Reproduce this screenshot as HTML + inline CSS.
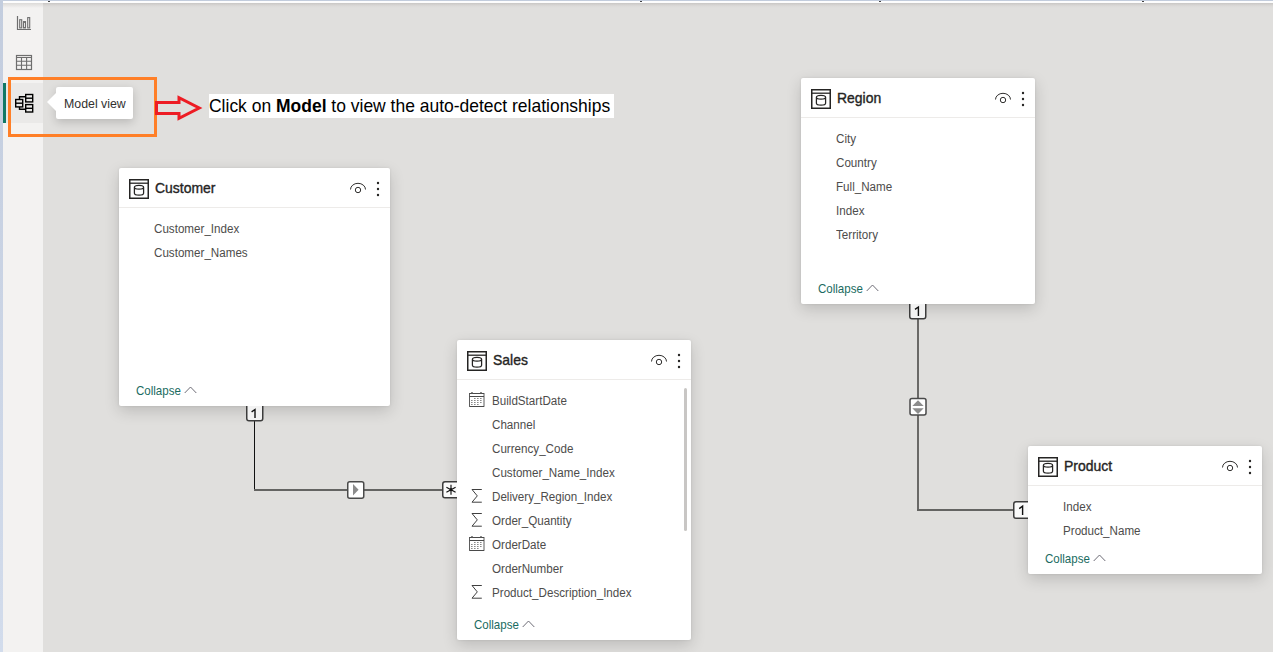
<!DOCTYPE html>
<html><head><meta charset="utf-8"><style>
*{box-sizing:border-box;margin:0;padding:0}
html,body{width:1273px;height:652px;overflow:hidden;background:#e0dfdd;font-family:"Liberation Sans",sans-serif;position:relative}
.abs{position:absolute}
.t{position:absolute;white-space:nowrap;transform-origin:0 0}
.card{position:absolute;background:#fff;border-radius:2px;box-shadow:0 5px 15px rgba(0,0,0,0.16),0 0 3px rgba(0,0,0,0.08)}
.card .ticon{position:absolute;left:9.5px;top:11px;width:20px;height:20px}
.card .title{left:36px;top:11px;font-size:15px;font-weight:400;-webkit-text-stroke:0.38px #252423;color:#252423;line-height:18px;transform:scaleX(0.93)}
.card .eye{position:absolute;top:12px;width:18px;height:14px}
.card .dots{position:absolute;top:12px;width:6px;height:18px}
.card .sep{position:absolute;left:0;right:0;top:39px;height:1px;background:#edebe9}
.card .f{left:34.5px;font-size:12.5px;color:#4d4c4b;line-height:14px;transform:scaleX(0.93)}
.card .col{left:16.5px;font-size:12.8px;color:#1a6b61;line-height:14px;transform:scaleX(0.9)}
.card .chev{position:absolute}
.fic{position:absolute}
</style></head><body>
<div class="abs" style="left:0;top:0;width:1273px;height:1px;background:#c2ccdc"></div>
<div class="abs" style="left:0;top:1px;width:1273px;height:2px;background:#fdfdfd"></div>
<div class="abs" style="left:3px;top:3px;width:1270px;height:5px;background:linear-gradient(#c9c7c5,#dcdad8 60%,rgba(224,223,221,0))"></div>
<div class="abs" style="left:0;top:0;width:3px;height:652px;background:linear-gradient(#c3cdde,#d2dcec)"></div>
<div class="abs" style="left:3px;top:3px;width:40px;height:649px;background:#f3f2f1"></div>
<div class="abs" style="left:3px;top:3px;width:40px;height:5px;background:linear-gradient(#dcdad8,rgba(243,242,241,0))"></div>
<div class="abs" style="left:6px;top:83px;width:37px;height:40px;background:#eae9e8"></div>
<div class="abs" style="left:3px;top:83px;width:3px;height:40px;background:#117865"></div>
<div class="abs" style="left:48px;top:1px;width:1.5px;height:1px;background:#444"></div>
<div class="abs" style="left:640px;top:1px;width:1.5px;height:1px;background:#444"></div>
<div class="abs" style="left:879px;top:1px;width:1.5px;height:1px;background:#444"></div>
<div class="abs" style="left:1142px;top:1px;width:1.5px;height:1px;background:#444"></div>
<svg class="abs" style="left:15px;top:15px" width="17" height="16" viewBox="0 0 17 16">
  <path d="M2.5 1 V14.5 H16" fill="none" stroke="#6e6e6e" stroke-width="1.2"/>
  <rect x="4.7" y="4.7" width="2" height="8.2" fill="none" stroke="#6e6e6e" stroke-width="1.1"/>
  <rect x="8.5" y="6.6" width="2" height="6.3" fill="none" stroke="#6e6e6e" stroke-width="1.1"/>
  <rect x="12.7" y="2.6" width="2" height="10.3" fill="none" stroke="#6e6e6e" stroke-width="1.1"/>
</svg>
<svg class="abs" style="left:15px;top:54px" width="18" height="17" viewBox="0 0 18 17">
  <rect x="1.5" y="1.5" width="15" height="14" fill="none" stroke="#6e6e6e" stroke-width="1.2"/>
  <path d="M1.5 3.5 H16.5 M1.5 7.3 H16.5 M1.5 11.3 H16.5 M6.5 3.5 V15.5 M11.6 3.5 V15.5" fill="none" stroke="#6e6e6e" stroke-width="1.1"/>
</svg>
<svg class="abs" style="left:14px;top:93px" width="20" height="20" viewBox="0 0 20 20">
  <g fill="none" stroke="#000" stroke-width="1.4">
    <rect x="1.7" y="6.5" width="7" height="7.4"/>
    <path d="M1.7 10.2 H8.7"/>
    <rect x="11.7" y="1.5" width="7" height="7.4"/>
    <path d="M11.7 5.2 H18.7"/>
    <rect x="11.7" y="11.6" width="7" height="7.4"/>
    <path d="M11.7 15.3 H18.7"/>
    <path d="M5.5 6.5 V3.7 H11.7 M5.5 13.9 V16.3 H11.7"/>
  </g>
</svg>
<div class="abs" style="left:8px;top:77px;width:149px;height:60px;border:3px solid #ff7f27"></div>
<div class="abs" style="left:56px;top:87px;width:77px;height:32px;background:#fff;border-radius:2px;box-shadow:0 3px 10px rgba(0,0,0,0.18)"></div>
<svg class="abs" style="left:46px;top:91px" width="12" height="22" viewBox="0 0 12 22"><path d="M11 1 L1 11 L11 21 Z" fill="#fff"/></svg>
<div class="t" style="left:63.5px;top:96.5px;font-size:13px;color:#323130;line-height:14px;transform:scaleX(0.95)">Model view</div>
<svg class="abs" style="left:153px;top:94px" width="52" height="29" viewBox="0 0 52 29"><path d="M3.5 8.6 H26 V3.6 L46.2 14 L26 24.4 V19.4 H3.5 Z" fill="none" stroke="#ed1c24" stroke-width="3"/></svg>
<div class="abs" style="left:209px;top:94px;width:405px;height:24px;background:#fff"></div>
<div class="t" style="left:208.7px;top:96px;font-size:17.7px;color:#000;line-height:20px;transform:scaleX(0.988)">Click on <b>Model</b> to view the auto-detect relationships</div>
<div class="abs" style="left:254px;top:420px;width:1px;height:71px;background:#111"></div>
<div class="abs" style="left:254px;top:489px;width:94px;height:2px;background:#646462"></div>
<div class="abs" style="left:363px;top:489px;width:80px;height:2px;background:#646462"></div>
<div class="abs" style="left:917px;top:318px;width:2px;height:81px;background:#6a6967"></div>
<div class="abs" style="left:917px;top:415px;width:2px;height:96px;background:#6a6967"></div>
<div class="abs" style="left:917px;top:509px;width:97px;height:2px;background:#646462"></div>
<div class="card" style="left:119px;top:168px;width:271px;height:238px"><svg class="ticon" viewBox="0 0 20 20"><g fill="none" stroke="#252423"><rect x="0.75" y="0.75" width="18.5" height="18.5" stroke-width="1.5"/><path d="M0.75 4.2 H19.25" stroke-width="1.3"/><path d="M5.4 8.3 V14.2 A4.6 1.9 0 0 0 14.6 14.2 V8.3 A4.6 1.9 0 0 0 5.4 8.3 A4.6 1.9 0 0 0 14.6 8.3" stroke-width="1.25"/></g></svg><span class="t title">Customer</span><svg class="eye" style="left:230px" viewBox="0 0 18 14"><g fill="none" stroke="#252423" stroke-width="0.95"><path d="M1.5 9.5 A7.5 6.2 0 0 1 16.5 9.5"/><circle cx="9" cy="10" r="2.7"/></g></svg><svg class="dots" style="left:256px" viewBox="0 0 6 18"><g fill="#252423"><circle cx="3" cy="3" r="1.2"/><circle cx="3" cy="9" r="1.2"/><circle cx="3" cy="15" r="1.2"/></g></svg><div class="sep"></div><div class="t f" style="top:54px">Customer_Index</div><div class="t f" style="top:78px">Customer_Names</div><div class="t col" style="top:216px">Collapse</div><svg class="chev" style="left:65px;top:218px" width="13" height="8" viewBox="0 0 13 8"><path d="M0.7 7 L6.5 1 L12.3 7" fill="none" stroke="#5c5b66" stroke-width="0.9"/></svg></div>
<div class="card" style="left:457px;top:340px;width:234px;height:300px"><svg class="ticon" viewBox="0 0 20 20"><g fill="none" stroke="#252423"><rect x="0.75" y="0.75" width="18.5" height="18.5" stroke-width="1.5"/><path d="M0.75 4.2 H19.25" stroke-width="1.3"/><path d="M5.4 8.3 V14.2 A4.6 1.9 0 0 0 14.6 14.2 V8.3 A4.6 1.9 0 0 0 5.4 8.3 A4.6 1.9 0 0 0 14.6 8.3" stroke-width="1.25"/></g></svg><span class="t title">Sales</span><svg class="eye" style="left:193px" viewBox="0 0 18 14"><g fill="none" stroke="#252423" stroke-width="0.95"><path d="M1.5 9.5 A7.5 6.2 0 0 1 16.5 9.5"/><circle cx="9" cy="10" r="2.7"/></g></svg><svg class="dots" style="left:219px" viewBox="0 0 6 18"><g fill="#252423"><circle cx="3" cy="3" r="1.2"/><circle cx="3" cy="9" r="1.2"/><circle cx="3" cy="15" r="1.2"/></g></svg><div class="sep"></div><svg class="fic" style="left:12px;top:52px" width="16" height="15" viewBox="0 0 16 15"><g fill="none" stroke="#4a4a4a"><path d="M0.5 1.5 H15 M0.5 4.5 H15 M0.5 14.5 H15" stroke-width="1.1"/><path d="M0.5 1 V14.8 M15 1 V14.8" stroke-width="0.9"/></g><g fill="#555"><circle cx="3" cy="1" r="0.9"/><circle cx="12" cy="1" r="0.9"/></g><g stroke="#8a8a8a" stroke-width="1"><path d="M5 6.5h1.6M8 6.5h1.6M11 6.5h1.6M2 8.5h1.6M5 8.5h1.6M8 8.5h1.6M11 8.5h1.6M2 10.5h1.6M5 10.5h1.6M8 10.5h1.6M11 10.5h1.6M2 12.5h1.6M5 12.5h1.6M8 12.5h1.6"/></g></svg><div class="t f" style="top:54px">BuildStartDate</div><div class="t f" style="top:78px">Channel</div><div class="t f" style="top:102px">Currency_Code</div><div class="t f" style="top:126px">Customer_Name_Index</div><svg class="fic" style="left:14px;top:149px" width="12" height="15" viewBox="0 0 12 15"><path d="M10.8 0.5 H1 L6.3 6.9 L1 13.2 H10.8" fill="none" stroke="#3f3f3f" stroke-width="1"/></svg><div class="t f" style="top:150px">Delivery_Region_Index</div><svg class="fic" style="left:14px;top:173px" width="12" height="15" viewBox="0 0 12 15"><path d="M10.8 0.5 H1 L6.3 6.9 L1 13.2 H10.8" fill="none" stroke="#3f3f3f" stroke-width="1"/></svg><div class="t f" style="top:174px">Order_Quantity</div><svg class="fic" style="left:12px;top:196px" width="16" height="15" viewBox="0 0 16 15"><g fill="none" stroke="#4a4a4a"><path d="M0.5 1.5 H15 M0.5 4.5 H15 M0.5 14.5 H15" stroke-width="1.1"/><path d="M0.5 1 V14.8 M15 1 V14.8" stroke-width="0.9"/></g><g fill="#555"><circle cx="3" cy="1" r="0.9"/><circle cx="12" cy="1" r="0.9"/></g><g stroke="#8a8a8a" stroke-width="1"><path d="M5 6.5h1.6M8 6.5h1.6M11 6.5h1.6M2 8.5h1.6M5 8.5h1.6M8 8.5h1.6M11 8.5h1.6M2 10.5h1.6M5 10.5h1.6M8 10.5h1.6M11 10.5h1.6M2 12.5h1.6M5 12.5h1.6M8 12.5h1.6"/></g></svg><div class="t f" style="top:198px">OrderDate</div><div class="t f" style="top:222px">OrderNumber</div><svg class="fic" style="left:14px;top:245px" width="12" height="15" viewBox="0 0 12 15"><path d="M10.8 0.5 H1 L6.3 6.9 L1 13.2 H10.8" fill="none" stroke="#3f3f3f" stroke-width="1"/></svg><div class="t f" style="top:246px">Product_Description_Index</div><div style="position:absolute;left:226.5px;top:48px;width:3px;height:143px;background:#c8c6c4;border-radius:2px"></div><div class="t col" style="top:278px">Collapse</div><svg class="chev" style="left:65px;top:280px" width="13" height="8" viewBox="0 0 13 8"><path d="M0.7 7 L6.5 1 L12.3 7" fill="none" stroke="#5c5b66" stroke-width="0.9"/></svg></div>
<div class="card" style="left:801px;top:78px;width:234px;height:226px"><svg class="ticon" viewBox="0 0 20 20"><g fill="none" stroke="#252423"><rect x="0.75" y="0.75" width="18.5" height="18.5" stroke-width="1.5"/><path d="M0.75 4.2 H19.25" stroke-width="1.3"/><path d="M5.4 8.3 V14.2 A4.6 1.9 0 0 0 14.6 14.2 V8.3 A4.6 1.9 0 0 0 5.4 8.3 A4.6 1.9 0 0 0 14.6 8.3" stroke-width="1.25"/></g></svg><span class="t title">Region</span><svg class="eye" style="left:193px" viewBox="0 0 18 14"><g fill="none" stroke="#252423" stroke-width="0.95"><path d="M1.5 9.5 A7.5 6.2 0 0 1 16.5 9.5"/><circle cx="9" cy="10" r="2.7"/></g></svg><svg class="dots" style="left:219px" viewBox="0 0 6 18"><g fill="#252423"><circle cx="3" cy="3" r="1.2"/><circle cx="3" cy="9" r="1.2"/><circle cx="3" cy="15" r="1.2"/></g></svg><div class="sep"></div><div class="t f" style="top:54px">City</div><div class="t f" style="top:78px">Country</div><div class="t f" style="top:102px">Full_Name</div><div class="t f" style="top:126px">Index</div><div class="t f" style="top:150px">Territory</div><div class="t col" style="top:204px">Collapse</div><svg class="chev" style="left:65px;top:206px" width="13" height="8" viewBox="0 0 13 8"><path d="M0.7 7 L6.5 1 L12.3 7" fill="none" stroke="#5c5b66" stroke-width="0.9"/></svg></div>
<div class="card" style="left:1028px;top:446px;width:234px;height:128px"><svg class="ticon" viewBox="0 0 20 20"><g fill="none" stroke="#252423"><rect x="0.75" y="0.75" width="18.5" height="18.5" stroke-width="1.5"/><path d="M0.75 4.2 H19.25" stroke-width="1.3"/><path d="M5.4 8.3 V14.2 A4.6 1.9 0 0 0 14.6 14.2 V8.3 A4.6 1.9 0 0 0 5.4 8.3 A4.6 1.9 0 0 0 14.6 8.3" stroke-width="1.25"/></g></svg><span class="t title">Product</span><svg class="eye" style="left:193px" viewBox="0 0 18 14"><g fill="none" stroke="#252423" stroke-width="0.95"><path d="M1.5 9.5 A7.5 6.2 0 0 1 16.5 9.5"/><circle cx="9" cy="10" r="2.7"/></g></svg><svg class="dots" style="left:219px" viewBox="0 0 6 18"><g fill="#252423"><circle cx="3" cy="3" r="1.2"/><circle cx="3" cy="9" r="1.2"/><circle cx="3" cy="15" r="1.2"/></g></svg><div class="sep"></div><div class="t f" style="top:54px">Index</div><div class="t f" style="top:78px">Product_Name</div><div class="t col" style="top:106px">Collapse</div><svg class="chev" style="left:65px;top:108px" width="13" height="8" viewBox="0 0 13 8"><path d="M0.7 7 L6.5 1 L12.3 7" fill="none" stroke="#5c5b66" stroke-width="0.9"/></svg></div>
<svg class="abs" style="left:0;top:0" width="1273" height="652" viewBox="0 0 1273 652">
<g stroke="#3c3c3c" stroke-width="1.5">
<path d="M246.75 406 V418.5 Q246.75 420.75 249 420.75 H260.5 Q262.75 420.75 262.75 418.5 V406" fill="#f2f2f2"/>
<path d="M909.75 304 V316.5 Q909.75 318.75 912 318.75 H923.5 Q925.75 318.75 925.75 316.5 V304" fill="#f2f2f2"/>
<path d="M1028 501.75 H1016 Q1013.75 501.75 1013.75 504 V516 Q1013.75 518.25 1016 518.25 H1028" fill="#fafafa"/>
<path d="M457 481.75 H445 Q442.75 481.75 442.75 484 V495.5 Q442.75 497.75 445 497.75 H457" fill="#fafafa"/>
</g>
<g stroke="#4a4a4a" stroke-width="1.5" fill="#fff">
<rect x="347.75" y="481.75" width="16" height="16.5" rx="2"/>
<rect x="910" y="398.5" width="16" height="16.5" rx="2"/>
</g>
<g fill="#8c8c8c">
<path d="M353 484 L358.6 489.75 L353 495.5 Z"/>
<path d="M912.3 405.9 L918 400.3 L923.7 405.9 Z"/>
<path d="M912.3 408.3 L918 413.9 L923.7 408.3 Z"/>
</g>
<g stroke="#111" stroke-width="1.15">
<path d="M451 484.8 V494.7 M446.4 487.2 L455.6 492.3 M446.4 492.3 L455.6 487.2"/>
</g>
<circle cx="451" cy="489.75" r="1.4" fill="#111"/>
<g fill="none" stroke="#111" stroke-width="1.4">
<path d="M251.6 411.9 L255 409.5 V418"/>
<path d="M915 309.4 L918.4 307 V316"/>
<path d="M1019.2 508.6 L1022.6 506.2 V515"/>
</g>
</svg>
</body></html>
